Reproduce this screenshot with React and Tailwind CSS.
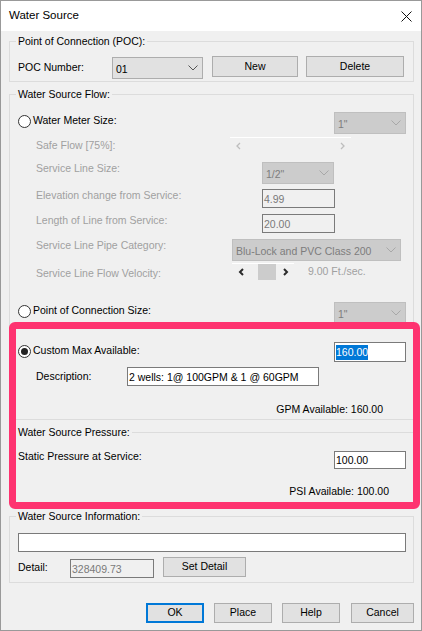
import React from "react";

// ---------- small win32-style controls ----------
function Chevron({ color = "#606060" }) {
  return (
    <svg width="10" height="6" viewBox="0 0 10 6" className="shrink-0">
      <polyline points="0.5,0.5 5,5 9.5,0.5" fill="none" stroke={color} strokeWidth="1" />
    </svg>
  );
}

function Arrow({ dir, bold }) {
  const pts = dir === "left" ? "5,1 2,4 5,7" : "2,1 5,4 2,7";
  return (
    <svg width="7" height="8" viewBox="0 0 7 8" className="shrink-0">
      <polyline
        points={pts}
        fill="none"
        stroke={bold ? "#2b2b2b" : "#bdbdbd"}
        strokeWidth={bold ? 2 : 1.3}
      />
    </svg>
  );
}

function Radio({ checked }) {
  return (
    <div className="w-[13px] h-[13px] rounded-full border border-[#333] bg-white flex items-center justify-center shrink-0">
      {checked && <div className="w-[7px] h-[7px] rounded-full bg-[#222]" />}
    </div>
  );
}

function Combo({ value, disabled, className = "" }) {
  return (
    <div
      className={
        "h-[22px] flex items-center justify-between pl-[3px] pr-[4px] border shrink-0 " +
        (disabled
          ? "bg-[#cccccc] border-[#bfbfbf] text-[#7d7d7d] "
          : "bg-[#e1e1e1] border-[#adadad] text-black ") +
        className
      }
    >
      <span className="leading-[14px] mt-[1px]">{value}</span>
      <Chevron color={disabled ? "#a8a8a8" : "#555"} />
    </div>
  );
}

function Field({ value, disabled, selected, className = "" }) {
  return (
    <div
      className={
        "flex items-center pl-[1px] border shrink-0 " +
        (disabled
          ? "bg-[#f0f0f0] border-[#7a7a7a] text-[#7a7a7a] "
          : "bg-white border-[#7a7a7a] text-black ") +
        className
      }
    >
      {selected ? (
        <span className="inline-block bg-[#0078d7] text-white leading-[15px] h-[15px]">{value}</span>
      ) : (
        <span className="leading-[14px]">{value}</span>
      )}
    </div>
  );
}

function Btn({ children, primary, className = "" }) {
  return (
    <div
      className={
        "flex items-center justify-center bg-[#e1e1e1] shrink-0 " +
        (primary ? "border-2 border-[#0078d7] " : "border border-[#adadad] ") +
        className
      }
    >
      {children}
    </div>
  );
}

function Group({ title, className = "", children }) {
  return (
    <fieldset className={"border border-[#dcdcdc] pl-2 pr-[7px] " + className}>
      <legend className="ml-[-2px] px-[2px] leading-[13px]">{title}</legend>
      {children}
    </fieldset>
  );
}

const GRAY = "text-[#a0a0a0]";

export default function App() {
  return (
    <div className="relative w-[422px] h-[631px] border border-[#999] bg-[#f0f0f0] flex flex-col font-['Liberation_Sans',Arial,sans-serif] text-[10.5px] text-black overflow-hidden">
      {/* Title bar */}
      <div className="h-[30px] bg-white flex items-center justify-between pl-2 pr-[9px] shrink-0">
        <span className="text-[11.5px]">Water Source</span>
        <svg width="11" height="11" viewBox="0 0 11 11">
          <path d="M0.5 0.5 L10.5 10.5 M10.5 0.5 L0.5 10.5" stroke="#111" strokeWidth="1" />
        </svg>
      </div>

      {/* Body */}
      <div className="flex-1 flex flex-col pl-2 pr-[7px]">
        {/* POC */}
        <Group title="Point of Connection (POC):" className="mt-1 pb-[2px]">
          <div className="mt-2 h-[23px] flex items-start">
            <div className="w-[94px] h-[23px] flex items-center">POC Number:</div>
            <Combo value="01" className="w-[91px] mt-[1px]" />
            <Btn className="ml-[9px] w-[86px] h-[21px]">New</Btn>
            <Btn className="ml-[8px] w-[98px] h-[21px]">Delete</Btn>
          </div>
        </Group>

        {/* Flow */}
        <Group title="Water Source Flow:" className="mt-[6px] pb-[3px]">
          <div className="mt-[11px] h-[22px] flex items-start">
            <div className="h-[18px] flex items-center">
              <Radio />
              <span className="ml-[2px]">Water Meter Size:</span>
            </div>
            <Combo value={'1"'} disabled className="ml-auto w-[72px]" />
          </div>

          <div className="mt-[3px] h-[17px] flex items-center">
            <div className={"ml-[18px] w-[194px] " + GRAY}>Safe Flow [75%]:</div>
            <div className="w-[121px] h-[17px] border-t border-white flex items-center justify-between px-[5px]">
              <Arrow dir="left" />
              <Arrow dir="right" />
            </div>
          </div>

          <div className="mt-[8px] h-[22px] flex items-start">
            <div className={"ml-[18px] w-[226px] h-[12px] leading-[12px] " + GRAY}>Service Line Size:</div>
            <Combo value={'1/2"'} disabled className="w-[72px]" />
          </div>

          <div className="mt-[5px] h-[19px] flex items-start">
            <div className={"ml-[18px] w-[226px] h-[12px] leading-[12px] " + GRAY}>Elevation change from Service:</div>
            <Field value="4.99" disabled className="w-[73px] h-[19px]" />
          </div>

          <div className="mt-[6px] h-[19px] flex items-start">
            <div className={"ml-[18px] w-[226px] h-[12px] leading-[12px] " + GRAY}>Length of Line from Service:</div>
            <Field value="20.00" disabled className="w-[73px] h-[19px]" />
          </div>

          <div className="mt-[6px] h-[22px] flex items-start">
            <div className={"ml-[18px] w-[196px] h-[12px] leading-[12px] " + GRAY}>Service Line Pipe Category:</div>
            <Combo value="Blu-Lock and PVC Class 200" disabled className="w-[169px]" />
          </div>

          <div className="mt-[2px] h-[17px] flex items-start">
            <div className={"ml-[18px] w-[196px] mt-[4px] h-[12px] leading-[12px] " + GRAY}>Service Line Flow Velocity:</div>
            <div className="w-[62px] h-[17px] border-t border-white flex items-center pl-[6px]">
              <Arrow dir="left" bold />
              <div className="ml-[13px] w-[18px] h-[16px] bg-[#cccccc]" />
              <div className="ml-[6px]">
                <Arrow dir="right" bold />
              </div>
            </div>
            <div className={"ml-[14px] h-[17px] flex items-center " + GRAY}>9.00 Ft./sec.</div>
          </div>

          <div className="mt-[22px] h-[22px] flex items-start">
            <div className="h-[18px] flex items-center">
              <Radio />
              <span className="ml-[2px]">Point of Connection Size:</span>
            </div>
            <Combo value={'1"'} disabled className="ml-auto w-[72px]" />
          </div>

          <div className="mt-[18px] h-[20px] flex items-start">
            <div className="h-[18px] flex items-center">
              <Radio checked />
              <span className="ml-[2px]">Custom Max Available:</span>
            </div>
            <Field value="160.00" selected className="ml-auto w-[72px] h-[20px]" />
          </div>

          <div className="mt-[5px] h-[19px] flex items-start">
            <div className="ml-[18px] w-[91px] h-[19px] flex items-center">Description:</div>
            <Field value="2 wells: 1@ 100GPM & 1 @ 60GPM" className="w-[192px] h-[19px]" />
          </div>

          <div className="mt-[17px] h-[13px] leading-[13px] flex justify-end pr-[23px]">
            GPM Available: 160.00
          </div>
        </Group>

        {/* Pressure */}
        <Group title="Water Source Pressure:" className="mt-[6px] pb-[5px]">
          <div className="mt-[12px] h-[18px] flex items-start">
            <div className="h-[10px] leading-[10px]">Static Pressure at Service:</div>
            <Field value="100.00" className="ml-auto w-[72px] h-[18px]" />
          </div>
          <div className="mt-[16px] h-[13px] leading-[13px] flex justify-end pr-[17px]">
            PSI Available: 100.00
          </div>
        </Group>

        {/* Information */}
        <Group title="Water Source Information:" className="mt-[6px] pb-[4px]">
          <Field value="" className="mt-[10px] w-full h-[19px]" />
          <div className="mt-[5px] h-[21px] flex items-start">
            <div className="w-[52px] h-[21px] flex items-center">Detail:</div>
            <Field value="328409.73" disabled className="mt-[2px] w-[84px] h-[19px]" />
            <Btn className="ml-[9px] w-[83px] h-[20px]">Set Detail</Btn>
          </div>
        </Group>

        {/* Dialog buttons */}
        <div className="mt-[20px] flex justify-end">
          <Btn primary className="w-[58px] h-[20px]">OK</Btn>
          <Btn className="ml-[10px] w-[58px] h-[20px]">Place</Btn>
          <Btn className="ml-[10px] w-[58px] h-[20px]">Help</Btn>
          <Btn className="ml-[11px] w-[63px] h-[20px]">Cancel</Btn>
        </div>
      </div>

      {/* Highlight annotation drawn over the dialog */}
      <div className="absolute left-[8px] top-[321px] w-[411px] h-[187px] border-[7px] border-[#fe3370] rounded-[6px] pointer-events-none" />
    </div>
  );
}
